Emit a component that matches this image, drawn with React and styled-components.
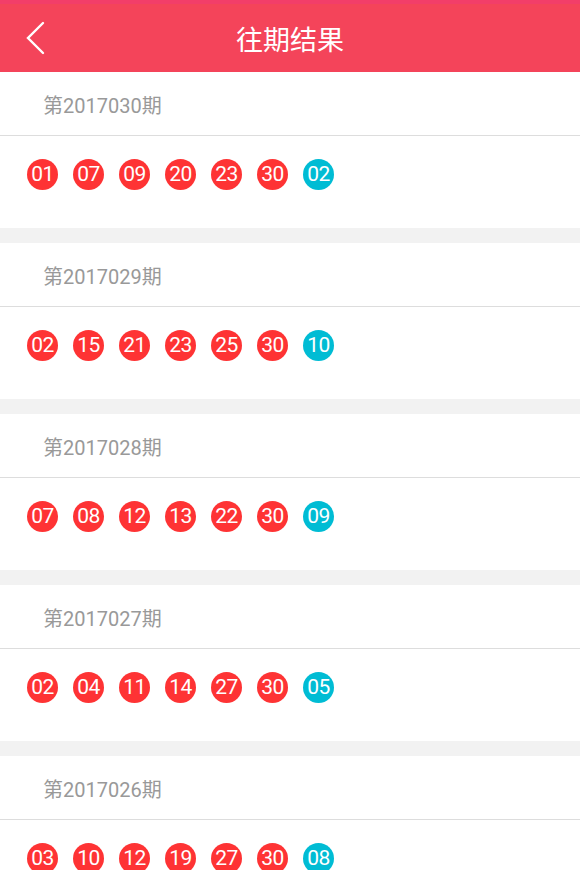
import React from "react";
import styled, { createGlobalStyle } from "styled-components";

const Global = createGlobalStyle`
  html, body { margin: 0; padding: 0; background: #f2f2f2; }
  body { font-family: Roboto, "Noto Sans CJK SC", sans-serif; }
`;

const Page = styled.div`
  width: 580px;
  min-height: 870px;
  background: #f2f2f2;
  overflow: hidden;
`;

const Header = styled.header`
  height: 68px;
  border-top: 4px solid #f23e69;
  background: #f4445a;
  display: flex;
  align-items: center;
  justify-content: center;
  position: relative;
`;

const Back = styled.button`
  position: absolute;
  left: 22px;
  top: 16px;
  width: 26px;
  height: 36px;
  padding: 0;
  border: 0;
  background: none;
  display: flex;
  align-items: center;
  justify-content: center;
`;

const Title = styled.h1`
  margin: 0;
  color: #fff;
  font-size: 27px;
  font-weight: 400;
  font-family: "Noto Sans CJK SC", sans-serif;
  letter-spacing: 0;
`;

const List = styled.div`
  display: flex;
  flex-direction: column;
  gap: 15px;
`;

const Card = styled.section`
  background: #fff;
`;

const Period = styled.div`
  height: 64px;
  box-sizing: border-box;
  padding: 2px 0 0 43px;
  display: flex;
  align-items: center;
  border-bottom: 1px solid #dddddd;
  color: #999;
  font-size: 20px;
  font-family: Roboto, "Noto Sans CJK SC", sans-serif;
`;

const Balls = styled.div`
  height: 92px;
  box-sizing: border-box;
  padding: 23px 0 0 27px;
  display: flex;
  align-items: flex-start;
  gap: 15px;
`;

const Ball = styled.span`
  width: 31px;
  height: 31px;
  border-radius: 50%;
  background: ${(p) => (p.$blue ? "#00bcd4" : "#fe3334")};
  color: #fff;
  font-family: Roboto, sans-serif;
  font-size: 21px;
  line-height: 31px;
  text-align: center;
  letter-spacing: -0.5px;
`;

const data = [
  ["2017030", ["01", "07", "09", "20", "23", "30"], "02"],
  ["2017029", ["02", "15", "21", "23", "25", "30"], "10"],
  ["2017028", ["07", "08", "12", "13", "22", "30"], "09"],
  ["2017027", ["02", "04", "11", "14", "27", "30"], "05"],
  ["2017026", ["03", "10", "12", "19", "27", "30"], "08"],
];

export default function App() {
  return (
    <Page>
      <Global />
      <Header>
        <Back aria-label="back">
          <svg width="22" height="34" viewBox="0 0 22 34">
            <polyline
              points="19,2 4,17 19,32"
              fill="none"
              stroke="#fff"
              strokeWidth="2.4"
              strokeLinecap="round"
              strokeLinejoin="miter"
            />
          </svg>
        </Back>
        <Title>往期结果</Title>
      </Header>
      <List>
        {data.map(([no, reds, blue]) => (
          <Card key={no}>
            <Period>第{no}期</Period>
            <Balls>
              {reds.map((n, i) => (
                <Ball key={i}>{n}</Ball>
              ))}
              <Ball $blue>{blue}</Ball>
            </Balls>
          </Card>
        ))}
      </List>
    </Page>
  );
}
